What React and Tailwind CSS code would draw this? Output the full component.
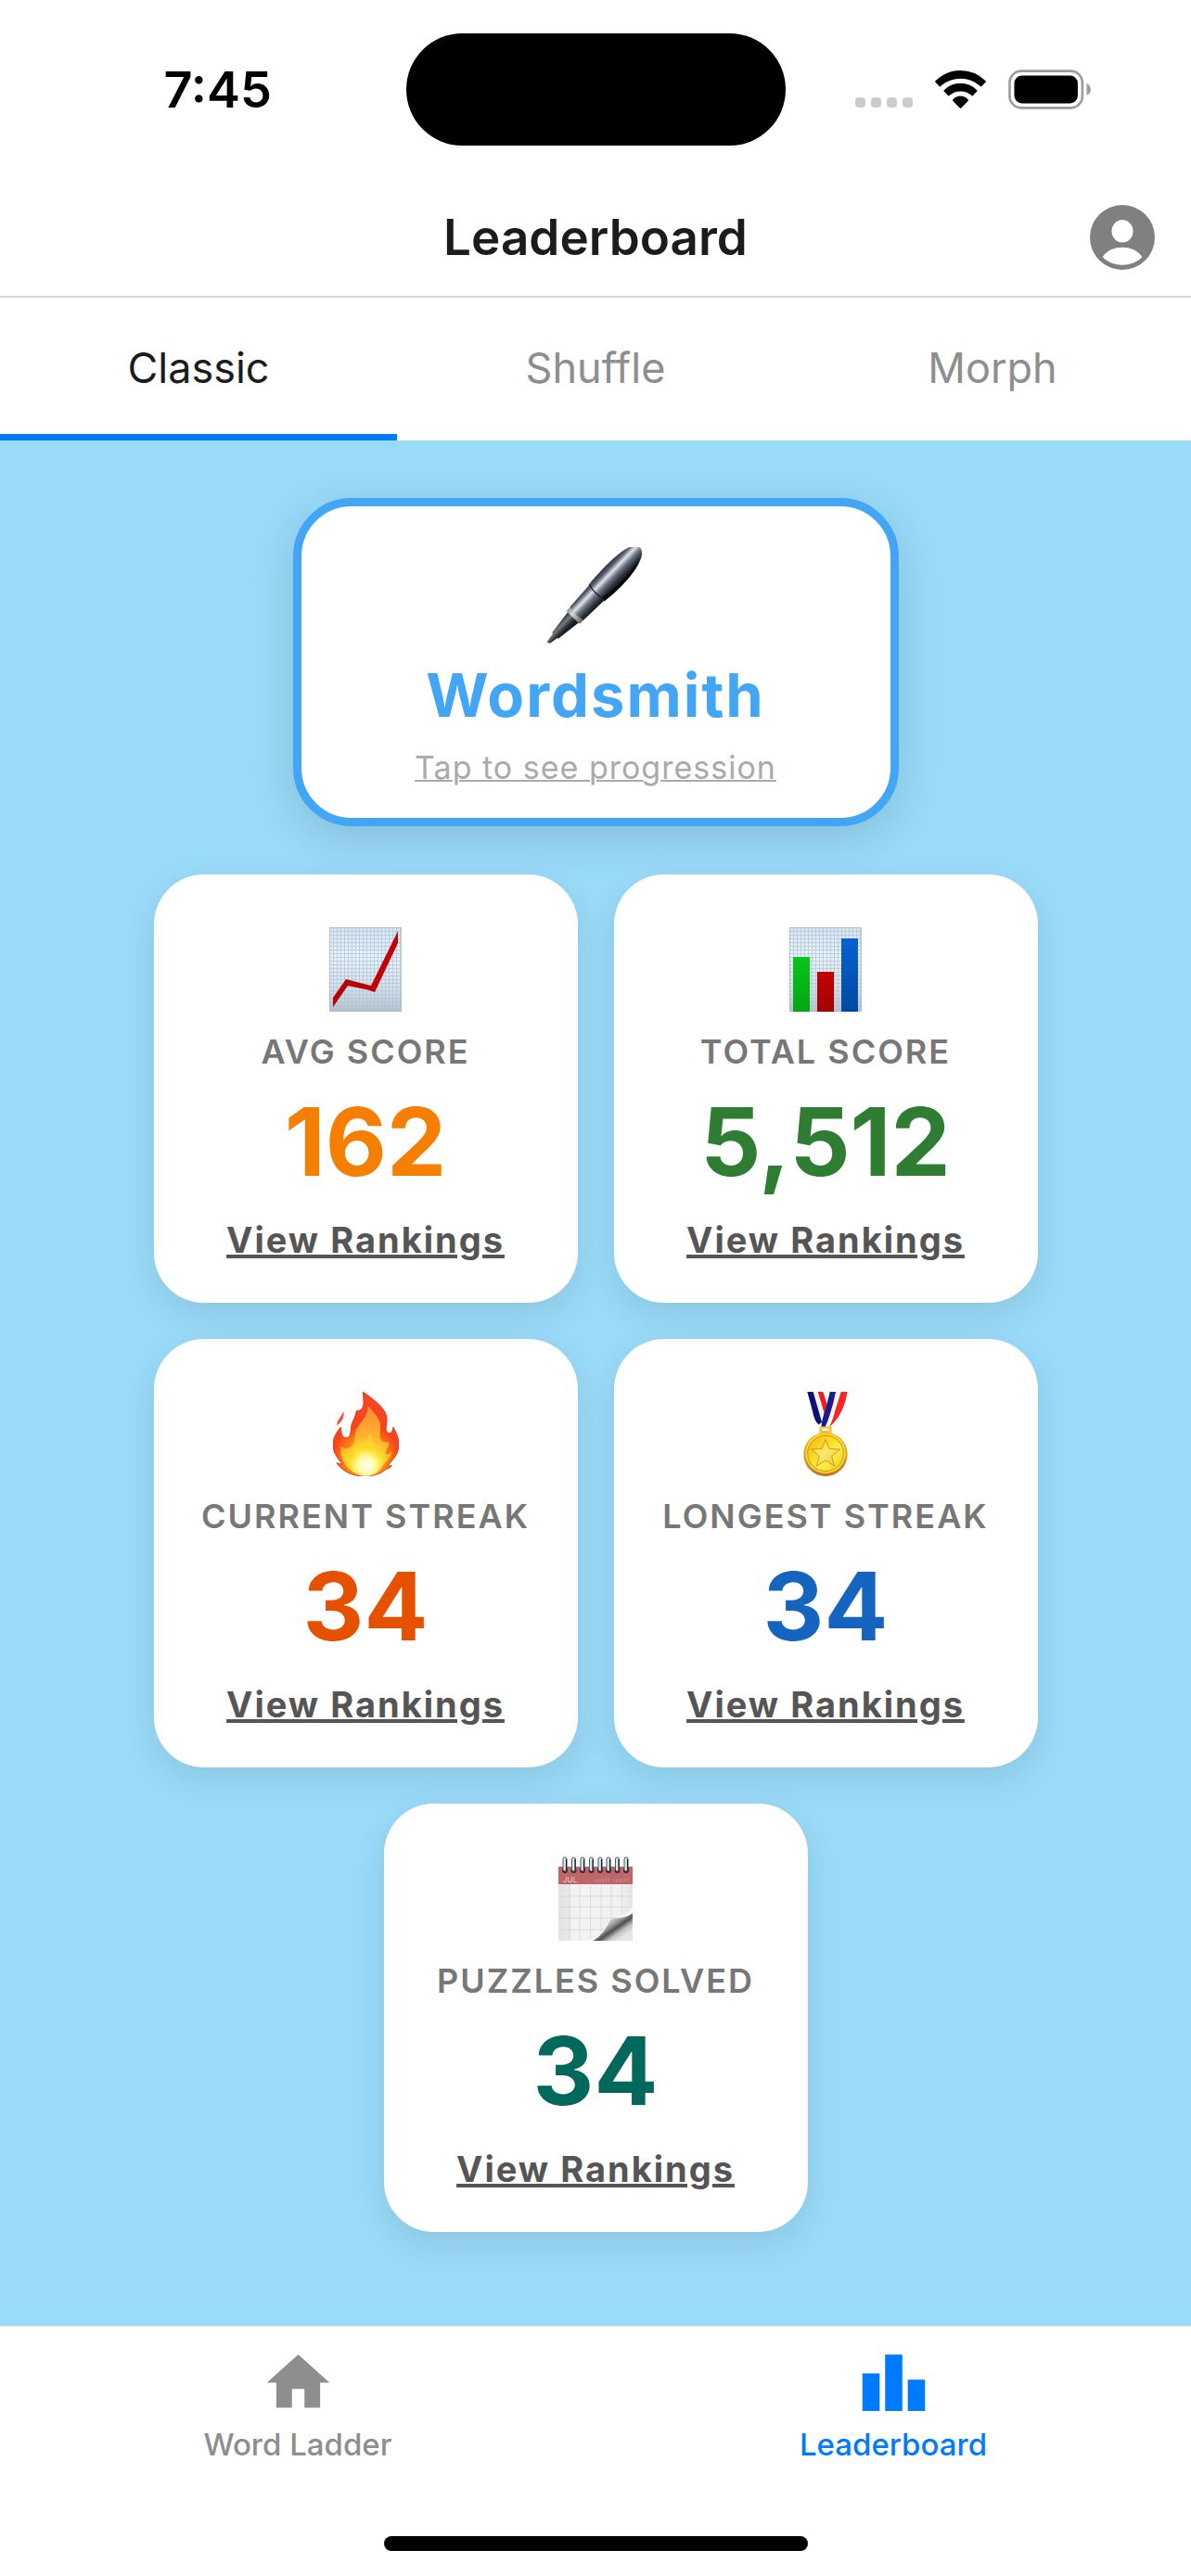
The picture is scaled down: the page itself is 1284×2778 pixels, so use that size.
import { useState } from "react";

/* ---------- Status bar icons ---------- */

function CellularDots() {
  return (
    <div className="flex gap-[6px] self-center pt-7">
      {[0, 1, 2, 3].map((n) => (
        <span key={n} className="size-[11px] rounded-[4px] bg-[#cbcbcb]" />
      ))}
    </div>
  );
}

function WifiIcon() {
  return (
    <svg viewBox="0 0 164 122" className="h-[41px] w-[55px]" aria-hidden="true">
      <path d="M2 33Q36 0 82 0T162 33Q165 35 162 38L151 50Q148 53 145 50Q118 26 82 26T19 50Q16 53 13 50L2 38Q-1 35 2 33Z" />
      <path d="M29 63Q52 41 82 41T135 63Q137 65 135 67L123 80Q120 83 117 80Q102 67 82 67T47 80Q44 83 41 80L29 67Q27 65 29 63Z" />
      <path d="M58 93Q68 82 82 82T106 93Q108 95 106 98L85 120Q82 123 79 120L58 98Q56 95 58 93Z" />
    </svg>
  );
}

function BatteryIcon() {
  return (
    <svg viewBox="0 0 268 130" className="h-[43px] w-[89px]" aria-hidden="true">
      <rect x="4" y="5" width="237" height="120" rx="38" fill="none" stroke="#9c9c9c" strokeWidth="8" />
      <rect x="19" y="20" width="207" height="90" rx="25" />
      <path d="M255 45Q268 52 268 65T255 84Z" fill="#9c9c9c" />
    </svg>
  );
}

/* ---------- App icons ---------- */

function ProfileIcon() {
  return (
    <svg viewBox="0 0 24 24" className="size-[84px]" aria-hidden="true">
      <circle cx="12" cy="12" r="10" fill="#808080" />
      <ellipse cx="12" cy="10.1" rx="3.3" ry="3.5" fill="#fff" />
      <path d="M6.1 17.7C7.5 16 9.6 15.1 12 15.1s4.5.9 5.9 2.600q.25.3 0 .6C16.400 19.700 14.300 20.500 12 20.500S7.600 19.700 6.100 18.300q-.25-.3 0-.6Z" fill="#fff" />
    </svg>
  );
}

function HomeIcon() {
  return (
    <svg viewBox="0 0 24 24" className="size-[81px]" fill="currentColor" aria-hidden="true">
      <path d="M10 20v-6h4v6h5v-8h3L12 3 2 12h3v8z" />
    </svg>
  );
}

function BarsIcon() {
  return (
    <svg viewBox="0 0 24 24" className="size-[81px]" fill="currentColor" aria-hidden="true">
      <path d="M7.500 21H2V9h5.500v12zm7.250-18h-5.500v18h5.500V3zM22 11h-5.500v10H22V11z" />
    </svg>
  );
}

/* ---------- Pictograms ---------- */

function PenPicture() {
  return (
    <svg viewBox="0 0 104 104" className="size-[104px]" aria-hidden="true">
      <defs>
        <linearGradient id="penBody" gradientUnits="userSpaceOnUse" x1="-13" y1="0" x2="13" y2="0">
          <stop offset="0" stopColor="#2b3038" />
          <stop offset=".18" stopColor="#59616c" />
          <stop offset=".36" stopColor="#dfe5ec" />
          <stop offset=".55" stopColor="#6d7682" />
          <stop offset=".78" stopColor="#2c3139" />
          <stop offset="1" stopColor="#0c0e12" />
        </linearGradient>
        <linearGradient id="penTip" gradientUnits="userSpaceOnUse" x1="-8" y1="0" x2="8" y2="0">
          <stop offset="0" stopColor="#23272b" />
          <stop offset=".35" stopColor="#747b80" />
          <stop offset=".65" stopColor="#2b2e31" />
          <stop offset="1" stopColor="#0b0c0d" />
        </linearGradient>
        <linearGradient id="penRing" gradientUnits="userSpaceOnUse" x1="-10" y1="0" x2="10" y2="0">
          <stop offset="0" stopColor="#8b8b8b" />
          <stop offset=".35" stopColor="#d9d7d3" />
          <stop offset="1" stopColor="#6d6a66" />
        </linearGradient>
      </defs>
      <g transform="translate(1 103) rotate(44)">
        <path d="M-1.500 0L-3.500-13H4L2-1Q0 1-1.500 0Z" fill="url(#penTip)" />
        <path d="M-4.500-11L-8-41H9L5-11Q0-8-4.500-11Z" fill="url(#penTip)" />
        <rect x="-9.500" y="-45" width="20" height="7" rx="1" fill="url(#penRing)" />
        <path d="M-10-44L-11.500-79H12L10.500-44Q0-41-10-44Z" fill="url(#penBody)" />
        <path d="M-12-76C-14-104-13-128-7-138Q0-147 7-138C15-126 16-100 12.500-76Q0-72-12-76Z" fill="url(#penBody)" />
        <path d="M8-76C12-96 12-114 8-131C15-118 16-96 12.500-74Z" fill="#07090c" />
        <path d="M-12-76Q0-72 12.500-76" fill="none" stroke="#15181c" strokeWidth="1.200" />
      </g>
    </svg>
  );
}

function GraphPaper({ id }) {
  return (
    <>
      <defs>
        <linearGradient id={id} x1="0" y1="0" x2="0" y2="1">
          <stop offset="0" stopColor="#dbe2e9" />
          <stop offset=".35" stopColor="#eef2f5" />
          <stop offset=".75" stopColor="#d9dde2" />
          <stop offset="1" stopColor="#b9c0c8" />
        </linearGradient>
        <pattern id={id + "Grid"} width="4" height="4" patternUnits="userSpaceOnUse">
          <path d="M0 .5H4M.5 0V4" stroke="#9cc4e4" strokeWidth=".9" opacity=".75" />
        </pattern>
      </defs>
      <rect width="78" height="91" fill={`url(#${id})`} />
      <rect width="78" height="91" fill={`url(#${id}Grid)`} />
      <rect x=".5" y=".5" width="77" height="90" fill="none" stroke="#aab4be" strokeOpacity=".6" />
    </>
  );
}

function TrendPicture() {
  return (
    <svg viewBox="0 0 78 91" className="h-[91px] w-[78px]" aria-hidden="true">
      <GraphPaper id="trendPaper" />
      <path d="M4 76L18 56L45 63L49 69L20 63L4 86Z" fill="#b80006" />
      <path d="M45 63L74 4V17L49 70L43 68Z" fill="#c40006" />
    </svg>
  );
}

function BarChartPicture() {
  return (
    <svg viewBox="0 0 78 91" className="h-[91px] w-[78px]" aria-hidden="true">
      <defs>
        <linearGradient id="barGreen" x1="0" y1="0" x2="0" y2="1">
          <stop offset="0" stopColor="#06c616" />
          <stop offset="1" stopColor="#03a614" />
        </linearGradient>
        <linearGradient id="barRed" x1="0" y1="0" x2="0" y2="1">
          <stop offset="0" stopColor="#c40000" />
          <stop offset="1" stopColor="#a40000" />
        </linearGradient>
        <linearGradient id="barBlue" x1="0" y1="0" x2="0" y2="1">
          <stop offset="0" stopColor="#0563d2" />
          <stop offset="1" stopColor="#0049a0" />
        </linearGradient>
      </defs>
      <GraphPaper id="barPaper" />
      <rect x="4" y="32" width="18" height="59" fill="url(#barGreen)" />
      <rect x="30" y="48" width="18" height="43" fill="url(#barRed)" />
      <rect x="56" y="12" width="18" height="79" fill="url(#barBlue)" />
    </svg>
  );
}

function FirePicture() {
  return (
    <svg viewBox="0 0 213 273" className="h-[91px] w-[71px]" aria-hidden="true">
      <defs>
        <radialGradient id="fireOuter" gradientUnits="userSpaceOnUse" cx="106" cy="215" r="215">
          <stop offset="0" stopColor="#ffb000" />
          <stop offset=".3" stopColor="#fb8a10" />
          <stop offset=".5" stopColor="#f6441c" />
          <stop offset="1" stopColor="#fb4626" />
        </radialGradient>
        <radialGradient id="fireMid" gradientUnits="userSpaceOnUse" cx="106" cy="235" r="190">
          <stop offset="0" stopColor="#fff9a0" />
          <stop offset=".22" stopColor="#ffe52a" />
          <stop offset=".5" stopColor="#fdb12c" />
          <stop offset="1" stopColor="#ff8a3c" />
        </radialGradient>
        <radialGradient id="fireCore" gradientUnits="userSpaceOnUse" cx="108" cy="238" r="62">
          <stop offset="0" stopColor="#fffff0" />
          <stop offset=".45" stopColor="#fffba8" />
          <stop offset="1" stopColor="#ffe93a" stopOpacity="0" />
        </radialGradient>
      </defs>
      <path d="M13 109C12 88 27 84 34 62C38 82 29 95 13 109Z" fill="#f2523c" />
      <path
        d="M97 0C132 26 174 54 174 88C174 108 167 122 176 132C188 138 195 126 194 114C206 134 214 152 213 174C211 202 194 220 178 236Q185 241 190 239Q182 248 172 250C150 268 126 273 102 273C62 271 34 260 12 230Q24 235 31 234C12 212 0 194 0 170C1 146 12 130 26 114C25 132 28 149 44 149C60 148 56 126 60 108C64 92 74 80 76 61C92 65 100 48 99 34Q99 16 97 0Z"
        fill="url(#fireOuter)"
        stroke="#f2300f"
        strokeWidth="3"
      />
      <path
        d="M113 46C136 72 158 90 153 124C150 150 152 166 180 163C184 178 166 186 172 202C180 206 188 196 192 188C188 214 166 232 150 250Q128 272 104 271C72 268 44 250 32 222C24 204 24 190 26 176C36 186 50 184 60 176C76 162 66 138 78 118C92 94 114 78 113 46Z"
        fill="url(#fireMid)"
      />
      <path d="M120 130C116 158 92 166 84 194C78 186 77 180 74 172C66 210 60 240 92 268L112 271C150 260 166 222 160 184C154 194 150 196 142 200C144 172 124 160 120 130Z" fill="#ffd92e" opacity=".6" />
      <ellipse cx="106" cy="230" rx="56" ry="43" fill="url(#fireCore)" />
    </svg>
  );
}

function MedalPicture() {
  return (
    <svg viewBox="0 0 144 273" className="h-[91px] w-[48px]" aria-hidden="true">
      <defs>
        <linearGradient id="medalRim" x1="0" y1="0" x2="0" y2="1">
          <stop offset="0" stopColor="#f0b92a" />
          <stop offset=".6" stopColor="#d99a26" />
          <stop offset="1" stopColor="#b8741c" />
        </linearGradient>
        <linearGradient id="medalFace" x1="0" y1="0" x2="1" y2="1">
          <stop offset="0" stopColor="#f3b410" />
          <stop offset=".4" stopColor="#fbdc24" />
          <stop offset=".6" stopColor="#fff04a" />
          <stop offset="1" stopColor="#f2c41c" />
        </linearGradient>
        <linearGradient id="medalStar" x1="0" y1="0" x2="1" y2="1">
          <stop offset="0" stopColor="#f0cf3a" />
          <stop offset=".5" stopColor="#fbe96a" />
          <stop offset="1" stopColor="#e9c02c" />
        </linearGradient>
      </defs>
      <path d="M47 0H64L82 56L70 84Z" fill="#f81616" />
      <path d="M30 0H47L68 68L60 112Z" fill="#f1f1f1" />
      <path d="M13 0H32L60 98L50 106Q36 96 30 62Z" fill="#0c1076" />
      <path d="M103 0H122L94 82L66 116V94Z" fill="#f4f4f4" />
      <path d="M122 0H143Q130 76 84 114Q98 84 102 64Z" fill="#ff2424" />
      <path d="M86 0H105Q92 66 70 116H58Q60 86 72 58Z" fill="#151c8e" />
      <path d="M52 112H92V138H52Z" fill="#f3c338" />
      <path d="M61 118H84V126H61Z" fill="#f9f3dc" />
      <circle cx="72" cy="202" r="71" fill="url(#medalRim)" />
      <circle cx="72" cy="199" r="65" fill="#fbd935" />
      <circle cx="72" cy="199" r="58" fill="url(#medalFace)" stroke="#c9921c" strokeWidth="3" />
      <path
        d="M72 154L84 184L119 186L92 208L101 240L72 222L43 240L52 208L25 186L60 184Z"
        fill="url(#medalStar)"
        stroke="#c99a22"
        strokeWidth="3"
        strokeLinejoin="round"
      />
    </svg>
  );
}

function CalendarPicture() {
  const rings = [7, 16.500, 26, 35.500, 45, 54, 63.500, 73];
  return (
    <svg viewBox="0 0 80 91" className="h-[91px] w-[80px]" aria-hidden="true">
      <defs>
        <linearGradient id="calPage" x1="0" y1="0" x2="1" y2="0">
          <stop offset="0" stopColor="#e3e3e3" />
          <stop offset=".16" stopColor="#e9e9e9" />
          <stop offset=".18" stopColor="#f3f3f3" />
          <stop offset=".84" stopColor="#f1f1f1" />
          <stop offset="1" stopColor="#e3e3e3" />
        </linearGradient>
        <linearGradient id="calCurl" gradientUnits="userSpaceOnUse" x1="54" y1="68" x2="68" y2="88">
          <stop offset="0" stopColor="#e4e4e4" />
          <stop offset=".35" stopColor="#8a8a8a" />
          <stop offset=".5" stopColor="#4e4e4e" />
          <stop offset=".75" stopColor="#c2c2c2" />
          <stop offset="1" stopColor="#e6e6e6" />
        </linearGradient>
      </defs>
      <rect y="11" width="80" height="80" fill="url(#calPage)" />
      <path d="M12 31V90M23 31V90M34.500 31V90M46 31V80M57 31V66M68.500 31V62M0 43H80M0 54.500H80M0 66.500H60M0 79H50" stroke="#d6d6d6" strokeWidth=".8" />
      <path d="M80 53V91H26Q50 88 57 66Q72 68 80 53Z" fill="#f8f8f8" />
      <path d="M80 61V91H37Q50 84 57 66Q72 68 80 61Z" fill="url(#calCurl)" />
      <rect y="11" width="80" height="19" fill="#bf6669" />
      <text x="5" y="28" fontSize="8" fontFamily="Inter, sans-serif" fill="#f0cfcf">JUL</text>
      <path d="M39 27V25M42 28V24M45 28V24M48 28V24M51 27V23M54 27V23M60 27V25M63 28V24M66 28V24M69 28V24M72 27V23M75 27V23" stroke="#d99a9b" strokeWidth=".8" />
      {rings.map((x) => (
        <g key={x}>
          <circle cx={x} cy="15" r="3" fill="#2f2527" />
          <rect x={x - 2} y="1" width="4" height="15" rx="2" fill="#dfe8f0" stroke="#4a5562" strokeWidth="1" />
          <path d={`M${x + 1.500} 3V15`} stroke="#1c2126" strokeWidth="1.200" />
        </g>
      ))}
    </svg>
  );
}

/* ---------- Page parts ---------- */

const STATS = [
  { label: "AVG SCORE", value: "162", color: "text-[#f77f00]", Picture: TrendPicture },
  { label: "TOTAL SCORE", value: "5,512", color: "text-[#2e7d32]", Picture: BarChartPicture },
  { label: "CURRENT STREAK", value: "34", color: "text-[#e65100]", Picture: FirePicture },
  { label: "LONGEST STREAK", value: "34", color: "text-[#1565c0]", Picture: MedalPicture },
  { label: "PUZZLES SOLVED", value: "34", color: "text-[#00695c]", Picture: CalendarPicture },
];

function StatCard({ label, value, color, Picture }) {
  return (
    <section className="flex w-[457px] flex-col items-center rounded-[54px] bg-white pt-14 pb-11 shadow-[0_12px_36px_rgba(0,0,0,0.1)]">
      <div className="flex h-[92px] items-center">
        <Picture />
      </div>
      <h2 className="mt-5 text-[36px] leading-[46px] font-semibold tracking-[2px] whitespace-nowrap text-[#777777]">{label}</h2>
      <p className={`mt-[22px] text-[102px] leading-[104px] font-bold ${color}`}>{value}</p>
      <a
        href="#rankings"
        className="mt-[30px] text-[38px] leading-[48px] font-bold tracking-[2px] text-[#555555] underline decoration-4"
      >
        View Rankings
      </a>
    </section>
  );
}

const TABS = ["Classic", "Shuffle", "Morph"];

export default function App() {
  const [tab, setTab] = useState("Classic");
  return (
    <div className="flex min-h-screen flex-col bg-white font-['Inter',sans-serif]">
      <div className="flex h-[193px] items-center">
        <div className="flex flex-1 justify-center pl-8 text-[54px] leading-[64px] font-semibold text-black">7:45</div>
        <div className="h-[121px] w-[409px] rounded-full bg-black" />
        <div className="flex flex-1 items-center justify-center gap-6 pr-8">
          <CellularDots />
          <WifiIcon />
          <BatteryIcon />
        </div>
      </div>

      <header className="grid h-32 grid-cols-[1fr_auto_1fr] items-center border-b-2 border-[#d8d8d8] px-8">
        <h1 className="col-start-2 text-[53px] leading-[64px] font-semibold text-[#1c1c1e]">Leaderboard</h1>
        <button type="button" aria-label="Profile" className="justify-self-end">
          <ProfileIcon />
        </button>
      </header>

      <div role="tablist" className="grid h-[154px] grid-cols-3">
        {TABS.map((name) => (
          <button
            key={name}
            type="button"
            role="tab"
            aria-selected={tab === name}
            onClick={() => setTab(name)}
            className={
              tab === name
                ? "border-b-[7px] border-[#007aff] pt-1 text-[45px] text-[#1c1c1e]"
                : "border-b-[7px] border-transparent pt-1 text-[45px] text-[#8e8e8f]"
            }
          >
            {name}
          </button>
        ))}
      </div>

      <main className="flex flex-1 flex-col items-center bg-[#9adbf9] pt-[62px] pb-[100px]">
        <button
          type="button"
          className="flex w-[653px] flex-col items-center rounded-[63px] border-[9px] border-[#42a5f5] bg-white pt-11 pb-8 shadow-[0_12px_48px_rgba(0,0,0,0.14)]"
        >
          <PenPicture />
          <span className="mt-4 text-[65px] leading-[80px] font-bold tracking-[2px] text-[#42a5f5]">Wordsmith</span>
          <span className="mt-4 text-[34px] leading-[44px] tracking-[1px] text-[#aaaaaa] underline decoration-2">
            Tap to see progression
          </span>
        </button>

        <div className="mt-[52px] flex max-w-[1000px] flex-wrap justify-center gap-[39px]">
          {STATS.map((stat) => (
            <StatCard key={stat.label} {...stat} />
          ))}
        </div>
      </main>

      <nav className="grid grid-cols-2 border-t border-[#e4e4e6] pt-5">
        <a href="#word-ladder" className="flex flex-col items-center text-[#8e8e8f]">
          <HomeIcon />
          <span className="mt-1 text-[33px] leading-[44px] font-medium">Word Ladder</span>
        </a>
        <a href="#leaderboard" aria-current="page" className="flex flex-col items-center text-[#007aff]">
          <BarsIcon />
          <span className="mt-1 text-[33px] leading-[44px] font-medium">Leaderboard</span>
        </a>
      </nav>
      <div className="flex justify-center pt-[77px] pb-[27px]">
        <div className="h-4 w-[457px] rounded-full bg-black" />
      </div>
    </div>
  );
}
